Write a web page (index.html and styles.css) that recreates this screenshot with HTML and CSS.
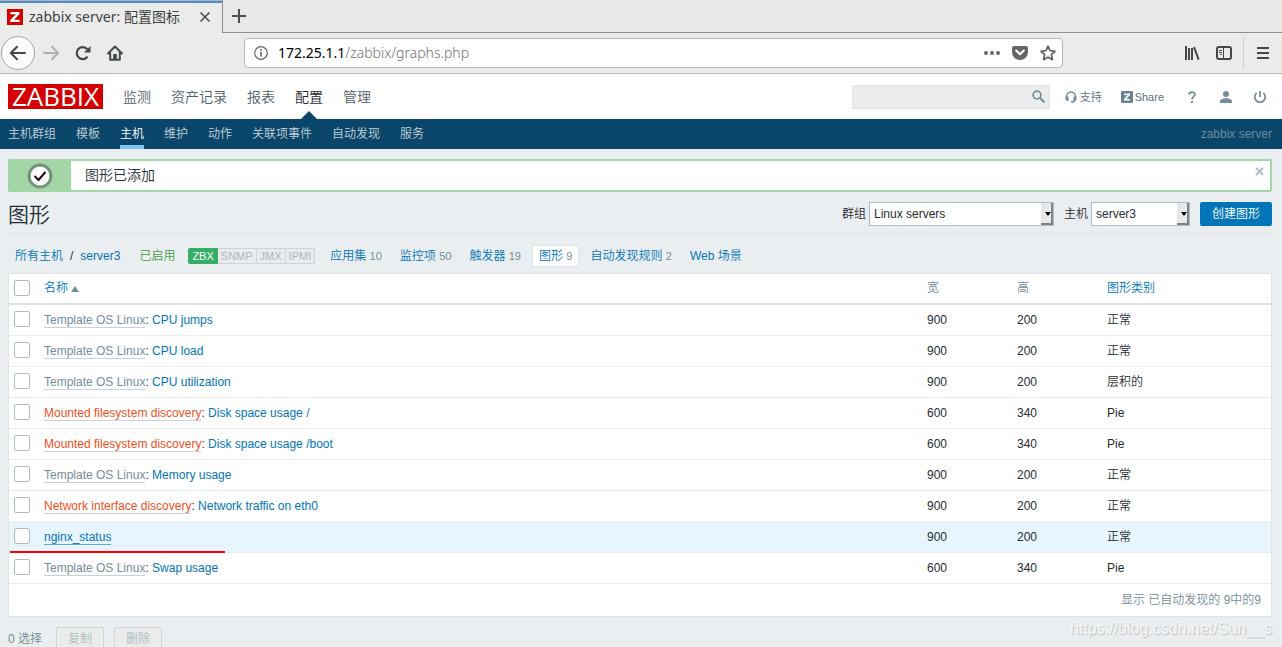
FILE: index.html
```
<!DOCTYPE html>
<html lang="zh-CN">
<head>
<meta charset="utf-8">
<title>zabbix server: 配置图标</title>
<link rel="stylesheet" href="styles.css">
</head>
<body>
<div class="browser">
  <div class="tabstrip">
    <div class="tab">
      <svg class="favicon" width="16" height="16" viewBox="0 0 16 16"><rect width="16" height="16" fill="#d40000"/><path d="M3.500 3h9v2L7 10.700h5.600V13H3.300v-2l5.600-5.700H3.500z" fill="#fff"/></svg>
      <span class="tab-title">zabbix server: 配置图标</span>
      <button class="tab-close" aria-label="关闭"><svg width="12" height="12" viewBox="0 0 12 12"><path d="M1.500 1.500l9 9M10.500 1.500l-9 9" stroke="#4a4f51" stroke-width="1.600" fill="none"/></svg></button>
    </div>
    <button class="tab-new" aria-label="新标签"><svg width="14" height="14" viewBox="0 0 14 14"><path d="M7 0v14M0 7h14" stroke="#4a4f51" stroke-width="2"/></svg></button>
  </div>
  <div class="toolbar">
    <div class="nav-buttons">
      <button class="back" aria-label="后退"><svg width="18" height="16" viewBox="0 0 18 16"><path d="M16 8H2M8 1.800L1.800 8 8 14.200" fill="none" stroke="#42484a" stroke-width="2" stroke-linejoin="round" stroke-linecap="round"/></svg></button>
      <button class="tool" aria-label="前进"><svg width="18" height="16" viewBox="0 0 18 16"><path d="M2 8h14M10 1.800L16.200 8 10 14.200" fill="none" stroke="#b0b0ae" stroke-width="2" stroke-linejoin="round" stroke-linecap="round"/></svg></button>
      <button class="tool" aria-label="刷新"><svg width="16" height="16" viewBox="0 0 16 16"><path d="M12.600 11.600A6 6 0 1 1 12.300 4.200" fill="none" stroke="#42484a" stroke-width="2.200"/><path d="M15.500 1v6.500H9z" fill="#42484a"/></svg></button>
      <button class="tool" aria-label="主页"><svg width="16" height="16" viewBox="0 0 16 16"><path d="M1 8.500L8 1.500l7 7M3.200 8v6.800h9.600V8" fill="none" stroke="#42484a" stroke-width="2" stroke-linejoin="round" stroke-linecap="round"/><path d="M6.200 9h3.600v6H6.200z" fill="#42484a"/></svg></button>
    </div>
    <div class="urlbar">
      <svg width="14" height="14" viewBox="0 0 14 14"><circle cx="7" cy="7" r="6.300" fill="none" stroke="#666" stroke-width="1.200"/><path d="M7 6v4.600M7 3.200v1.600" stroke="#666" stroke-width="1.700"/></svg>
      <span class="url"><b>172.25.1.1</b>/zabbix/graphs.php</span>
      <button class="tool" aria-label="更多"><svg width="16" height="16" viewBox="0 0 16 16" fill="#666"><circle cx="2" cy="8" r="2"/><circle cx="8" cy="8" r="2"/><circle cx="14" cy="8" r="2"/></svg></button>
      <button class="tool" aria-label="Pocket"><svg width="16" height="16" viewBox="0 0 16 16"><path d="M2 1h12q2 0 2 2v4.500a8 7.500 0 0 1-16 0V3q0-2 2-2z" fill="#666"/><path d="M4.200 5.500L8 9.200l3.800-3.700" fill="none" stroke="#fff" stroke-width="2" stroke-linecap="round" stroke-linejoin="round"/></svg></button>
      <button class="tool" aria-label="收藏"><svg width="16" height="16" viewBox="0 0 16 16"><path d="M8 1.200l2.100 4.500 4.900.6-3.600 3.400 1 4.900L8 12.200l-4.400 2.400 1-4.900L1 6.300l4.900-.6z" fill="none" stroke="#666" stroke-width="1.800" stroke-linejoin="round"/></svg></button>
    </div>
    <div class="right-buttons">
      <button class="tool" aria-label="书库"><svg width="16" height="16" viewBox="0 0 16 16"><path d="M2 1v14M5 3v12M8 3v12M10 2l4.600 12.600" fill="none" stroke="#42484a" stroke-width="2"/></svg></button>
      <button class="tool" aria-label="侧栏"><svg width="16" height="14" viewBox="0 0 16 14"><rect x="1" y="1" width="14" height="12" rx="2" fill="none" stroke="#42484a" stroke-width="2"/><path d="M7.500 1v12M3 4.500h3M3 6.500h3M4 8.500h2" stroke="#42484a"/></svg></button>
      <button class="tool menu" aria-label="菜单"><svg width="12" height="12" viewBox="0 0 12 12"><path d="M0 1h12M0 6h12M0 11h12" stroke="#42484a" stroke-width="2"/></svg></button>
    </div>
  </div>
</div>

<header class="header">
  <a class="logo" href="#">ZABBIX</a>
  <nav class="main-nav">
    <a href="#">监测</a><a href="#">资产记录</a><a href="#">报表</a><a href="#" class="current">配置</a><a href="#">管理</a>
  </nav>
  <div class="header-tools">
    <form class="search">
      <input type="text" aria-label="搜索">
      <button type="button" aria-label="搜索"><svg width="13" height="13" viewBox="0 0 13 13"><circle cx="5" cy="5" r="3.900" fill="none" stroke="#768d99" stroke-width="1.700"/><path d="M8 8l4.300 4.300" stroke="#768d99" stroke-width="2"/></svg></button>
    </form>
    <a href="#" class="support"><svg width="12" height="12" viewBox="0 0 12 12"><path d="M1.500 7V5.500a4.500 4.500 0 0 1 9 0V7M10 9q-.5 2-4 2" fill="none" stroke="#768d99" stroke-width="1.500"/><path d="M.5 5.500h3v4.500H2L.5 8.500zM8.500 5.500h3v3L10 10H8.500z" fill="#768d99"/></svg>支持</a>
    <a href="#" class="share"><svg width="12" height="12" viewBox="0 0 12 12"><rect width="12" height="12" rx="1" fill="#6b8390"/><path d="M3 2.500h6v1.600L5.400 8H9v1.600H3V8l3.500-3.900H3z" fill="#fff"/></svg>Share</a>
    <a href="#" aria-label="帮助" class="help"><svg width="8" height="12" viewBox="0 0 8 12"><path d="M1 3.500C1 .3 7 .3 7 3.500 7 5.500 4 5.500 4 8.500" fill="none" stroke="#768d99" stroke-width="1.700"/><path d="M3 10h2v2H3z" fill="#768d99"/></svg></a>
    <a href="#" aria-label="用户" class="user"><svg width="12" height="12" viewBox="0 0 12 12" fill="#768d99"><circle cx="6" cy="3" r="3"/><path d="M0 12V9.500Q2 7 6 7t6 2.500V12z"/></svg></a>
    <a href="#" aria-label="退出" class="power"><svg width="12" height="12" viewBox="0 0 12 12"><path d="M2.700 2A5.200 5.200 0 1 0 9.300 2M6 0v6" fill="none" stroke="#768d99" stroke-width="1.700"/></svg></a>
  </div>
</header>
<nav class="sub-nav">
  <a href="#">主机群组</a><a href="#">模板</a><a href="#" class="current">主机</a><a href="#">维护</a><a href="#">动作</a><a href="#">关联项事件</a><a href="#">自动发现</a><a href="#">服务</a>
  <span class="server-name">zabbix server</span>
</nav>

<main class="page">
  <div class="message">
    <div class="message-icon"><svg width="26" height="26" viewBox="0 0 26 26"><circle cx="13" cy="13" r="11" fill="#fff" stroke="#749476" stroke-width="3"/><path d="M7.500 13l4 4 7-8" fill="none" stroke="#111" stroke-width="2"/></svg></div>
    <span class="message-text">图形已添加</span>
    <button class="message-close" aria-label="关闭"><svg width="9" height="9" viewBox="0 0 9 9"><path d="M1 1l7 7M8 1L1 8" stroke="#acbbc2" stroke-width="1.800"/></svg></button>
  </div>

  <div class="title-row">
    <h1>图形</h1>
    <form class="filters">
      <label for="group">群组</label>
      <span class="select group"><select id="group"><option>Linux servers</option></select></span>
      <label for="host">主机</label>
      <span class="select host"><select id="host"><option>server3</option></select></span>
      <button type="button" class="primary">创建图形</button>
    </form>
  </div>

  <nav class="object-nav">
    <span class="crumbs"><a href="#">所有主机</a><span>/</span><a href="#">server3</a></span>
    <span class="enabled">已启用</span>
    <span class="status"><span class="on">ZBX</span><span>SNMP</span><span>JMX</span><span>IPMI</span></span>
    <a href="#" class="item">应用集 <sup>10</sup></a>
    <a href="#" class="item">监控项 <sup>50</sup></a>
    <a href="#" class="item">触发器 <sup>19</sup></a>
    <a href="#" class="item selected">图形 <sup>9</sup></a>
    <a href="#" class="item">自动发现规则 <sup>2</sup></a>
    <a href="#" class="item">Web 场景</a>
  </nav>

  <div class="table-wrap">
    <table class="list">
      <thead>
        <tr><th class="check"><input type="checkbox" aria-label="全选"></th><th><a href="#">名称 <svg width="8" height="6" viewBox="0 0 8 6"><path d="M4 0l4 6H0z" fill="#768d99"/></svg></a></th><th class="size">宽</th><th class="size">高</th><th class="type"><a href="#">图形类别</a></th></tr>
      </thead>
      <tbody>
        <tr><td><input type="checkbox" aria-label="CPU jumps"></td><td><a href="#" class="tpl">Template OS Linux</a>: <a href="#">CPU jumps</a></td><td>900</td><td>200</td><td>正常</td></tr>
        <tr><td><input type="checkbox" aria-label="CPU load"></td><td><a href="#" class="tpl">Template OS Linux</a>: <a href="#">CPU load</a></td><td>900</td><td>200</td><td>正常</td></tr>
        <tr><td><input type="checkbox" aria-label="CPU utilization"></td><td><a href="#" class="tpl">Template OS Linux</a>: <a href="#">CPU utilization</a></td><td>900</td><td>200</td><td>层积的</td></tr>
        <tr><td><input type="checkbox" aria-label="Disk space usage /"></td><td><a href="#" class="tpl rule">Mounted filesystem discovery</a>: <a href="#">Disk space usage /</a></td><td>600</td><td>340</td><td>Pie</td></tr>
        <tr><td><input type="checkbox" aria-label="Disk space usage /boot"></td><td><a href="#" class="tpl rule">Mounted filesystem discovery</a>: <a href="#">Disk space usage /boot</a></td><td>600</td><td>340</td><td>Pie</td></tr>
        <tr><td><input type="checkbox" aria-label="Memory usage"></td><td><a href="#" class="tpl">Template OS Linux</a>: <a href="#">Memory usage</a></td><td>900</td><td>200</td><td>正常</td></tr>
        <tr><td><input type="checkbox" aria-label="Network traffic on eth0"></td><td><a href="#" class="tpl rule">Network interface discovery</a>: <a href="#">Network traffic on eth0</a></td><td>900</td><td>200</td><td>正常</td></tr>
        <tr class="hover"><td><input type="checkbox" aria-label="nginx_status"><span class="marker"></span></td><td><a href="#" class="active-link">nginx_status</a></td><td>900</td><td>200</td><td>正常</td></tr>
        <tr><td><input type="checkbox" aria-label="Swap usage"></td><td><a href="#" class="tpl">Template OS Linux</a>: <a href="#">Swap usage</a></td><td>600</td><td>340</td><td>Pie</td></tr>
      </tbody>
    </table>
    <div class="table-footer">显示 已自动发现的 9中的9</div>
  </div>

  <div class="actions">
    <span>0 选择</span>
    <button disabled>复制</button>
    <button disabled>删除</button>
  </div>
</main>
<div class="watermark">https://blog.csdn.net/Sun__s</div>
</body>
</html>
```
FILE: styles.css
```
* { box-sizing: border-box; }

body {
  margin: 0;
  height: 100vh;
  overflow: hidden;
  position: relative;
  background: #ebeef0;
  color: #1f2c33;
  font: 350 12px/18px "Liberation Sans", "Noto Sans CJK SC", sans-serif;
}

a { color: #0275b8; text-decoration: none; }
button, input, select { font: inherit; color: inherit; margin: 0; }
button { border: 0; padding: 0; background: none; }
svg { flex: none; }

/* Browser window */
.browser { font-family: "Noto Sans", "Noto Sans CJK SC", sans-serif; background: #ebebea; }
.tabstrip { display: flex; height: 33px; background: #e8e8e7; }
.tab {
  display: flex;
  align-items: center;
  width: 223px;
  padding: 0 11px 0 7px;
  border-top: 1px solid #b5b3ae;
  border-right: 1px solid #8f8f8d;
  background: #ebebea;
  box-shadow: inset 0 2px #4a90d9;
}
.tab-title { flex: 1; margin-left: 6px; font-size: 14px; font-weight: 400; color: #3b4143; white-space: nowrap; }
.tab-close, .tab-new, .tool, .back { display: flex; align-items: center; justify-content: center; }
.tab-new { flex: 1; justify-content: flex-start; padding-left: 9px; border-bottom: 1px solid #8f8f8d; }
.toolbar { display: flex; align-items: center; height: 41px; border-bottom: 1px solid #b6b6b3; }
.nav-buttons { display: flex; align-items: center; width: 244px; padding-left: 1px; }
.back { width: 34px; height: 34px; border: 1px solid #a5a5a3; border-radius: 50%; background: #fcfcfc; }
.tool { width: 32px; height: 32px; }
.urlbar {
  display: flex;
  align-items: center;
  flex: 1;
  height: 30px;
  padding-left: 9px;
  border: 1px solid #b6b6b3;
  border-radius: 4px;
  background: #fff;
}
.urlbar .tool { width: 28px; }
.url { flex: 1; margin-left: 10px; font-size: 14px; color: #707070; }
.url b { font-weight: 400; color: #000; }
.right-buttons { display: flex; justify-content: flex-end; width: 219px; }
.menu { width: 39px; border-left: 1px solid #cfcfcd; margin-left: 3px; }

/* Header */
.header { display: flex; align-items: center; height: 45px; padding: 0 10px 0 8px; background: #fff; }
.logo {
  width: 95px;
  height: 25px;
  background: #d40000;
  color: #fff;
  font: 500 26px/25px "Open Sans", sans-serif;
  text-align: center;
}
.main-nav { display: flex; gap: 20px; height: 45px; margin-left: 20px; font-size: 14px; line-height: 46px; }
.main-nav a { color: #50606a; }
.main-nav .current { position: relative; color: #1f2c33; }
.main-nav .current::after {
  content: "";
  position: absolute;
  left: 6px;
  bottom: 0;
  border: 8px solid transparent;
  border-top: 0;
  border-bottom-color: #0a466a;
}
.header-tools { display: flex; align-items: center; margin-left: auto; padding-right: 6px; font-size: 11px; }
.header-tools a { display: flex; align-items: center; gap: 3px; color: #61717a; }
.search { display: flex; width: 198px; height: 24px; border: 1px solid #e2e4e5; background: #ececec; }
.search input { flex: 1; min-width: 0; border: 0; background: none; }
.search button { display: flex; align-items: center; padding: 0 4px; }
.support { margin-left: 15px; }
.share { margin-left: 19px; }
.header-tools .share { gap: 2px; }
.help { margin-left: 24px; }
.user { margin-left: 24px; }
.power { margin-left: 22px; }

.sub-nav { display: flex; gap: 20px; height: 30px; padding: 0 10px 0 8px; background: #0a466a; line-height: 30px; }
.sub-nav a { color: #c4d2da; }
.sub-nav .current { color: #fff; border-bottom: 4px solid #7cc4f5; }
.server-name { margin-left: auto; color: #6c8b9c; }

/* Page */
.page { padding: 10px 10px 0 8px; }
.message { display: flex; height: 33px; border: 2px solid #a3d6a6; border-radius: 2px; background: #fff; }
.message-icon { display: flex; align-items: center; justify-content: center; width: 61px; padding-right: 2px; background: #a3d6a6; }
.message-text { flex: 1; margin-left: 14px; font-size: 14px; line-height: 28px; }
.message-close { align-self: flex-start; display: flex; padding: 6px; }

.title-row { display: flex; justify-content: space-between; align-items: center; height: 42px; padding-top: 2px; border-bottom: 1px solid #dfe4e7; }
h1 { margin: 0; padding-top: 2px; font-size: 21px; font-weight: inherit; line-height: 24px; }
.filters { display: flex; align-items: center; }
.filters label { margin-right: 3px; }
.select { position: relative; height: 24px; margin-right: 10px; }
.select select { display: block; width: 100%; height: 24px; padding: 0 18px 0 4px; appearance: none; border: 1px solid #acbbc2; border-radius: 0; background: #fff; }
.select::after {
  content: "";
  position: absolute;
  box-sizing: border-box;
  top: 1px;
  right: 1px;
  width: 12px;
  height: 22px;
  border-right: 2px solid #848484;
  border-bottom: 2px solid #848484;
  background: #e9e9e9;
  pointer-events: none;
}
.select::before {
  content: "";
  position: absolute;
  z-index: 1;
  top: 10px;
  right: 3px;
  border: 3px solid transparent;
  border-top: 4px solid #000;
  border-bottom: 0;
  pointer-events: none;
}
.group { width: 185px; }
.host { width: 99px; }
.primary { height: 24px; padding: 0 12px; border-radius: 2px; background: #0275b8; color: #fff; }

.object-nav { display: flex; align-items: center; gap: 4px; height: 39px; padding: 5px 0 0 7px; }
.crumbs { display: flex; gap: 7px; }
.enabled { margin-left: 15px; color: #429e47; }
.status { display: flex; margin: 0 4px 0 9px; font-size: 11px; line-height: 14px; }
.status span { padding: 0 3px; border: 1px solid #ccd5d9; border-left-width: 0; background: #ebebeb; color: #acbbc2; }
.status .on { border-color: #34af67; border-left-width: 1px; border-radius: 2px 0 0 2px; background: #34af67; color: #fff; }
.item { padding: 1px 6px; border: 1px solid transparent; border-radius: 2px; }
.item sup { font-size: 11px; line-height: 1; vertical-align: baseline; color: #768d99; }
.item.selected { background: #fff; border-color: #dfe4e7; }

.table-wrap { border: 1px solid #dfe4e7; background: #fff; }
.list { width: 100%; border-collapse: collapse; table-layout: fixed; }
.list th, .list td { height: 31px; padding: 0 5px; border-bottom: 1px solid #ebeef0; text-align: left; font-weight: inherit; }
.list th { height: 30px; padding-bottom: 2px; color: #768d99; border-bottom: 2px solid #dce2e5; }
.check { width: 30px; }
.size { width: 90px; }
.type { width: 169px; }
.list td:first-child { padding-bottom: 2px; }
.list input {
  display: block;
  width: 16px;
  height: 16px;
  appearance: none;
  border: 1px solid #acbbc2;
  border-radius: 2px;
  background: #fff;
}
.tpl { color: #768d99; border-bottom: 1px solid #c8d1d5; }
.rule { color: #f24f1d; }
.active-link { border-bottom: 1px solid #5aa5d1; }
.hover { background: #e8f5ff; }
.hover td:first-child { position: relative; }
.marker { position: absolute; z-index: 1; left: 1px; bottom: -1px; width: 215px; height: 2px; background: #ff0000; }
.table-footer { height: 32px; padding-right: 10px; line-height: 32px; text-align: right; color: #768d99; }

.actions { display: flex; align-items: center; gap: 10px; margin-top: 10px; color: #768d99; }
.actions span { margin-right: 4px; }
.actions button { width: 48px; height: 24px; border: 1px solid #ccd5d9; border-radius: 2px; background: #ebebeb; color: #acbbc2; }

.watermark { position: absolute; right: 10px; bottom: 8px; font-size: 16px; line-height: 20px; color: #f5f7f8; text-shadow: 1px 1px 1px #b9bec1; }
```
